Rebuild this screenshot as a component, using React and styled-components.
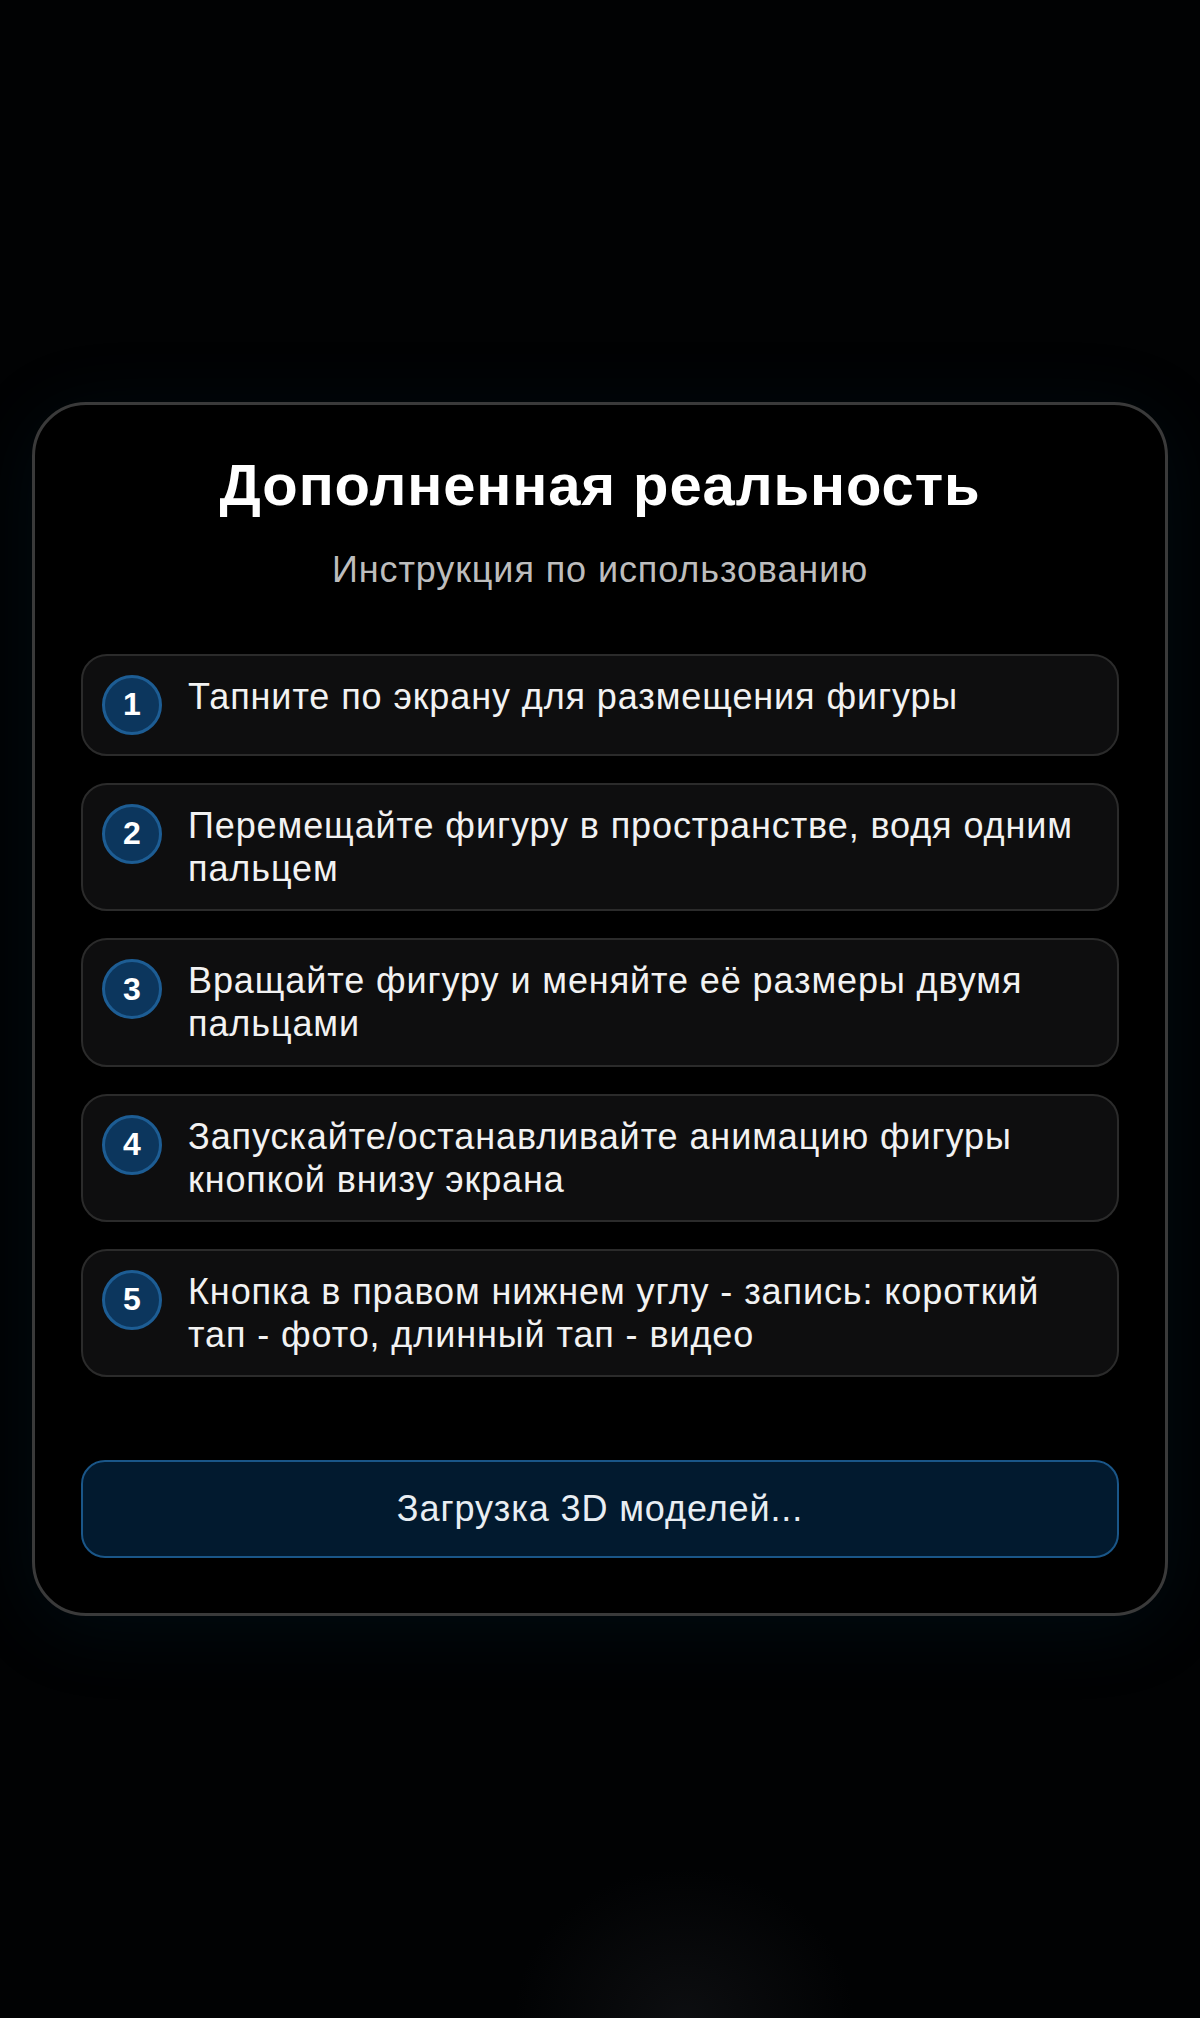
import React from "react";
import styled, { createGlobalStyle } from "styled-components";

const GlobalStyle = createGlobalStyle`
  * { box-sizing: border-box; }
  html, body { margin: 0; padding: 0; background: #000; }
  body {
    font-family: "Liberation Sans", Arial, Helvetica, sans-serif;
    color: #fff;
  }
`;

const Screen = styled.div`
  min-height: 100vh;
  display: flex;
  align-items: center;
  justify-content: center;
  padding: 0 32px;
  letter-spacing: 0.9px;
  background:
    radial-gradient(ellipse 170px 150px at 57% 100%, rgba(60, 62, 70, 0.2), rgba(0, 0, 0, 0) 100%),
    #010203;
`;

const Card = styled.section`
  width: 100%;
  background: #000;
  border: 3px solid #3a3a3a;
  border-radius: 54px;
  padding: 46px 46px 55px;
  display: flex;
  flex-direction: column;
  box-shadow: 0 12px 80px rgba(0, 80, 110, 0.14);
`;

const Title = styled.h1`
  margin: 0 0 31px;
  font-size: 58px;
  font-weight: 700;
  text-align: center;
  color: #fff;
  line-height: normal;
`;

const Subtitle = styled.p`
  margin: 0 0 63px;
  font-size: 36px;
  text-align: center;
  color: #bdbdbd;
  line-height: normal;
`;

const Steps = styled.ol`
  list-style: none;
  margin: 0;
  padding: 0;
  display: flex;
  flex-direction: column;
  gap: 27px;
`;

const Step = styled.li`
  display: flex;
  align-items: flex-start;
  gap: 26px;
  padding: 19px;
  background: #0e0e0f;
  border: 2px solid #2b2b2b;
  border-radius: 26px;
`;

const Num = styled.span`
  flex: 0 0 60px;
  width: 60px;
  height: 60px;
  border-radius: 50%;
  background: #0c365d;
  border: 3px solid #1d5d94;
  display: flex;
  align-items: center;
  justify-content: center;
  font-size: 32px;
  font-weight: 700;
  letter-spacing: 0;
  color: #fff;
`;

const StepText = styled.span`
  font-size: 36px;
  line-height: 1.2;
  color: #f2f2f2;
`;

const LoadButton = styled.button`
  margin-top: 83px;
  width: 100%;
  padding: 26px 20px;
  background: #021a2f;
  border: 2px solid #1a5688;
  border-radius: 24px;
  font-family: "Liberation Sans", Arial, Helvetica, sans-serif;
  font-size: 36px;
  letter-spacing: 0.9px;
  line-height: normal;
  color: #e9eef3;
  text-align: center;
`;

const steps = [
  "Тапните по экрану для размещения фигуры",
  "Перемещайте фигуру в пространстве, водя одним пальцем",
  "Вращайте фигуру и меняйте её размеры двумя пальцами",
  "Запускайте/останавливайте анимацию фигуры кнопкой внизу экрана",
  "Кнопка в правом нижнем углу - запись: короткий тап - фото, длинный тап - видео",
];

export default function App() {
  return (
    <>
      <GlobalStyle />
      <Screen>
        <Card>
          <Title>Дополненная реальность</Title>
          <Subtitle>Инструкция по использованию</Subtitle>
          <Steps>
            {steps.map((s, i) => (
              <Step key={i}>
                <Num>{i + 1}</Num>
                <StepText>{s}</StepText>
              </Step>
            ))}
          </Steps>
          <LoadButton>Загрузка 3D моделей...</LoadButton>
        </Card>
      </Screen>
    </>
  );
}
